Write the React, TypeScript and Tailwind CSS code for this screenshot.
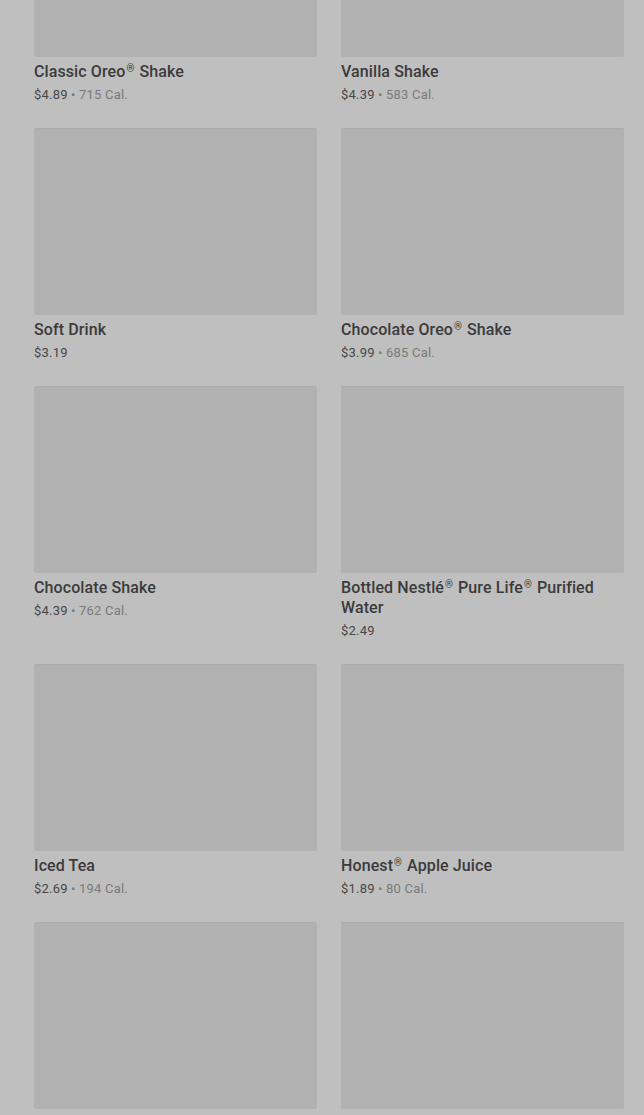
import React from "react";

type Item = { name: string; price: string; cal?: string };

const items: Item[] = [
  { name: "Classic Oreo® Shake", price: "$4.89", cal: "715 Cal." },
  { name: "Vanilla Shake", price: "$4.39", cal: "583 Cal." },
  { name: "Soft Drink", price: "$3.19" },
  { name: "Chocolate Oreo® Shake", price: "$3.99", cal: "685 Cal." },
  { name: "Chocolate Shake", price: "$4.39", cal: "762 Cal." },
  { name: "Bottled Nestlé® Pure Life® Purified Water", price: "$2.49" },
  { name: "Iced Tea", price: "$2.69", cal: "194 Cal." },
  { name: "Honest® Apple Juice", price: "$1.89", cal: "80 Cal." },
  { name: "Sweet Iced Tea", price: "$2.69", cal: "194 Cal." },
  { name: "Smoothie", price: "$3.99", cal: "230 Cal." },
];

function Name({ text }: { text: string }) {
  const parts = text.split("®");
  return (
    <>
      {parts.map((p, i) => (
        <React.Fragment key={i}>
          {p}
          {i < parts.length - 1 && (
            <span className="text-[10px] align-[5px] leading-none mx-[1px]">®</span>
          )}
        </React.Fragment>
      ))}
    </>
  );
}

function Card({ item }: { item: Item }) {
  return (
    <div className="flex flex-col">
      <div className="h-[187px] rounded-[2px] bg-[#b1b1b1] border-t border-[#ababab]" />
      <div className="mt-[5px] text-[16px] leading-[20px] font-medium text-[#3b3b3b] tracking-[0.1px]">
        <Name text={item.name} />
      </div>
      <div className="mt-[3px] text-[13px] leading-[20px] tracking-[0.2px]">
        <span className="text-[#474747]">{item.price}</span>
        {item.cal && (
          <>
            <span className="text-[#7a7a7a]"> • </span>
            <span className="text-[#7a7a7a]">{item.cal}</span>
          </>
        )}
      </div>
    </div>
  );
}

export default function App() {
  return (
    <div
      className="h-[1115px] overflow-hidden bg-[#bfbfbf]"
      style={{ fontFamily: "Roboto, 'Noto Sans', sans-serif" }}
    >
      <div className="mt-[-130px] pl-[34px] pr-[20px] grid grid-cols-2 gap-x-[24px] gap-y-[23px] items-start">
        {items.map((it, i) => (
          <Card key={i} item={it} />
        ))}
      </div>
    </div>
  );
}
